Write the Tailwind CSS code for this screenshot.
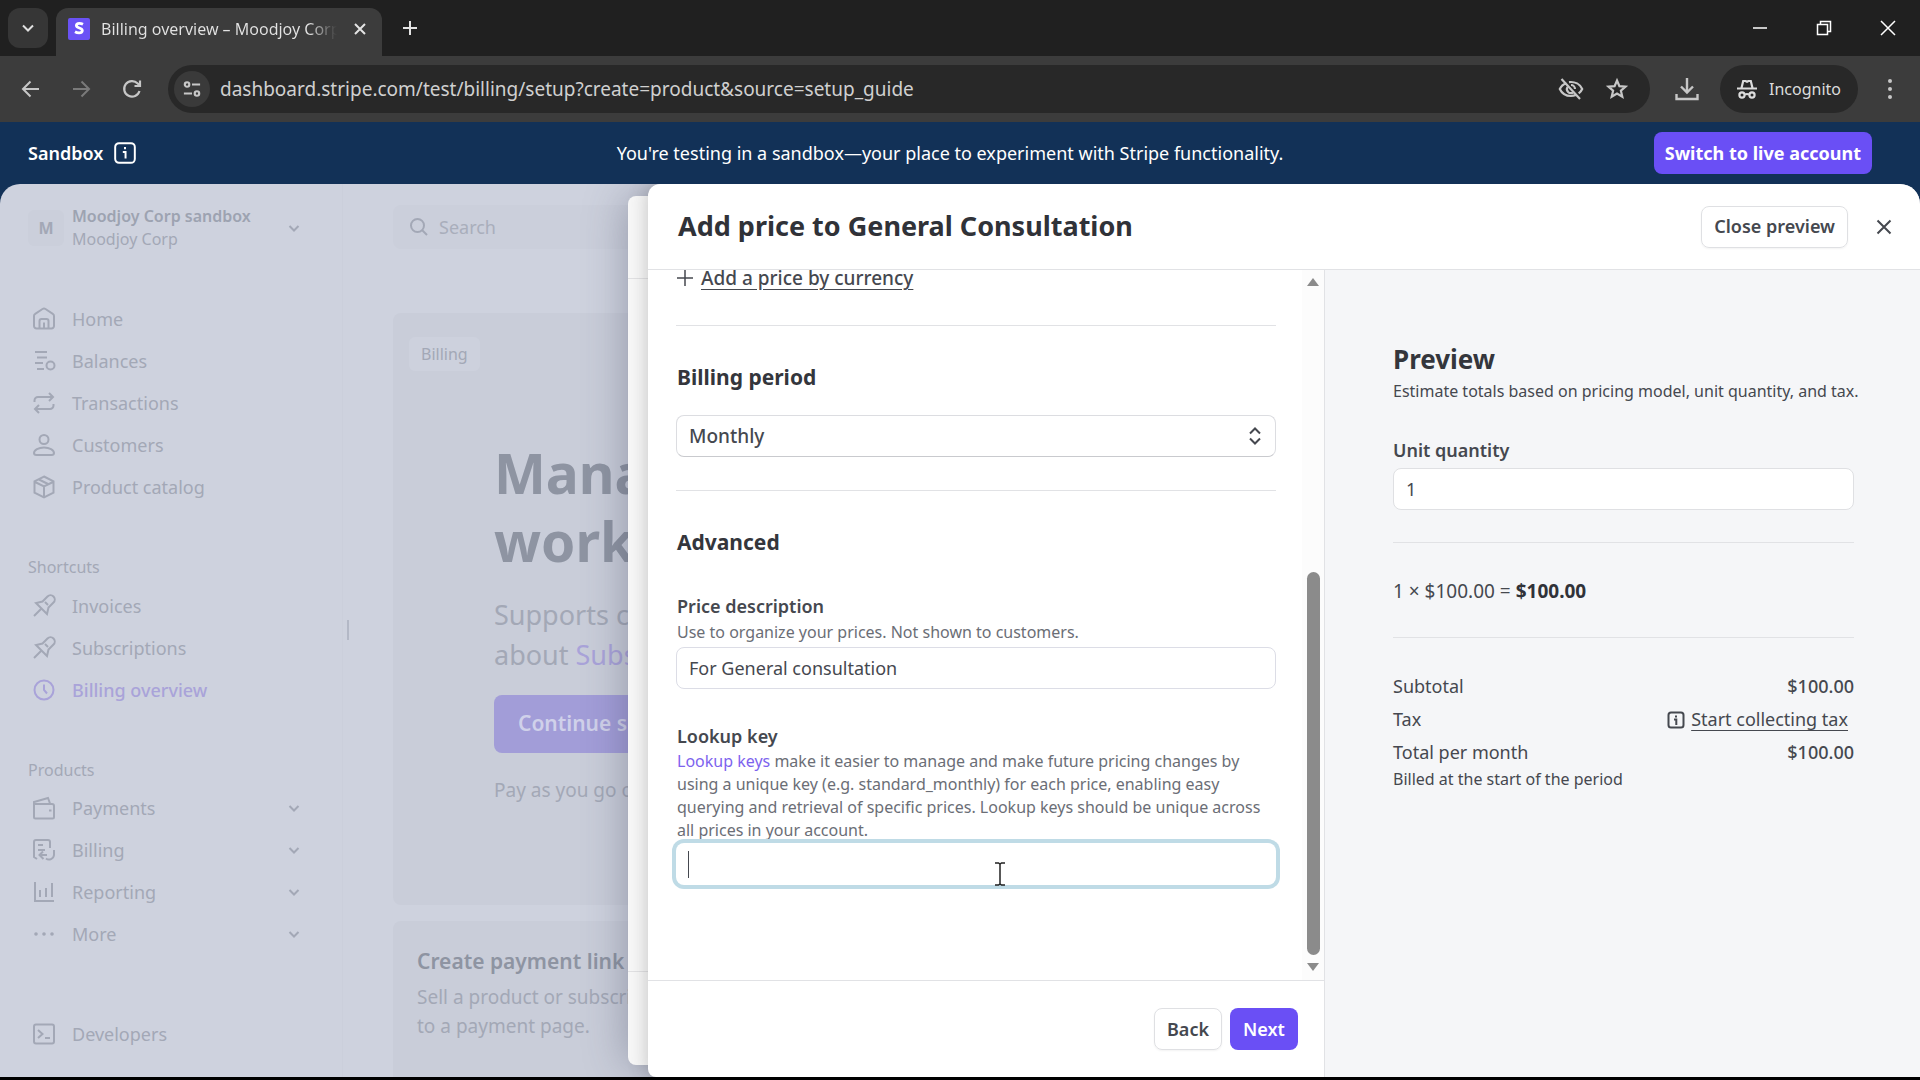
<!DOCTYPE html>
<html lang="en">
<head>
    <meta charset="UTF-8">
    <meta name="viewport" content="width=device-width, initial-scale=1.0">
    <title>Billing overview – Moodjoy Corp</title>
    <script src="https://cdn.jsdelivr.net/npm/@tailwindcss/browser@4"></script>
</head>
<body class="h-screen overflow-hidden bg-black font-['Noto_Sans',sans-serif] text-[18px] text-[#45484f]">
    <div class="flex h-full flex-col pb-[3px]">

        <!-- Browser tabs -->
        <div class="flex h-14 shrink-0 items-end bg-[#202020] pl-2">
            <button aria-label="Search tabs" class="mb-2 flex h-10 w-10 items-center justify-center rounded-xl bg-[#363636] text-[#e0e0e0]">
                <svg class="h-4 w-4" viewBox="0 0 16 16" fill="none" stroke="currentColor" stroke-width="2"><path d="M3 5.500l5 5 5-5"/></svg>
            </button>
            <div class="ml-2 flex h-12 w-[326px] items-center rounded-t-xl bg-[#3c3c3c] pr-[14px] pl-[11px] text-[#e3e3e3]">
                <svg class="mb-[6px] h-6 w-6 shrink-0" viewBox="0 0 24 24"><rect x="1" y="1" width="22" height="22" rx="2" fill="#6a52f5"/><path d="M16 7.300C14.800 6.700 13.500 6.400 12.300 6.400c-1.800 0-2.900.8-2.900 2.100 0 3 5.900 2 5.900 5 0 1.500-1.300 2.300-3.200 2.300-1.400 0-2.900-.4-4.100-1.100" fill="none" stroke="#fff" stroke-width="2.800"/></svg>
                <div class="mb-[6px] ml-[10px] w-[236px] overflow-hidden whitespace-nowrap bg-linear-to-r from-[#e3e3e3] from-88% to-[#3c3c3c] bg-clip-text text-[16px] leading-6 text-transparent">Billing overview – Moodjoy Corp</div>
                <button aria-label="Close tab" class="mb-[6px] ml-auto"><svg class="h-4 w-4" viewBox="0 0 16 16" stroke="currentColor" stroke-width="2"><path d="M3 3l10 10M13 3L3 13"/></svg></button>
            </div>
            <button aria-label="New tab" class="mb-[18px] ml-[18px] text-[#e3e3e3]"><svg class="h-5 w-5" viewBox="0 0 20 20" stroke="currentColor" stroke-width="2"><path d="M10 3v14M3 10h14"/></svg></button>
            <div class="mb-5 ml-auto flex items-center gap-12 pr-6 text-white">
                <button aria-label="Minimize"><svg class="h-4 w-4" viewBox="0 0 16 16" stroke="currentColor" stroke-width="1.500"><path d="M1 8h14"/></svg></button>
                <button aria-label="Restore"><svg class="h-4 w-4" viewBox="0 0 16 16" fill="none" stroke="currentColor" stroke-width="1.500"><path d="M1.500 4.500h10v10h-10zM4.500 4.500v-3h10v10h-3"/></svg></button>
                <button aria-label="Close window"><svg class="h-4 w-4" viewBox="0 0 16 16" stroke="currentColor" stroke-width="1.500"><path d="M1 1l14 14M15 1L1 15"/></svg></button>
            </div>
        </div>

        <!-- Address bar -->
        <div class="flex h-[66px] shrink-0 items-center bg-[#3c3c3c] pr-[18px] pl-5 text-[#c7c7c7]">
            <button aria-label="Back"><svg class="h-[22px] w-[22px]" viewBox="0 0 22 22" fill="none" stroke="currentColor" stroke-width="2"><path d="M19 11H3M10.500 3.500L3 11l7.500 7.500"/></svg></button>
            <button aria-label="Forward" class="ml-7 text-[#7a7a7a]"><svg class="h-[22px] w-[22px]" viewBox="0 0 22 22" fill="none" stroke="currentColor" stroke-width="2"><path d="M3 11h16M11.500 3.500L19 11l-7.500 7.500"/></svg></button>
            <button aria-label="Reload" class="ml-7"><svg class="h-6 w-6" viewBox="0 0 24 24" fill="none" stroke="currentColor" stroke-width="2.200"><path d="M19.500 14a7.800 7.800 0 1 1-1.800-7.500L20 8.800M20 3.500V9h-5.500"/></svg></button>
            <div class="ml-6 flex h-12 flex-1 items-center rounded-full bg-[#282828] pr-5 pl-[6px]">
                <button aria-label="Site information" class="flex h-9 w-9 items-center justify-center rounded-full bg-[#3a3a3a]"><svg class="h-[18px] w-[18px]" viewBox="0 0 20 20" fill="none" stroke="currentColor" stroke-width="2.400"><circle cx="4.500" cy="5" r="2.500"/><path d="M10 5h9M1 15h9"/><circle cx="15.500" cy="15" r="2.500"/></svg></button>
                <input aria-label="Address" type="text" value="dashboard.stripe.com/test/billing/setup?create=product&source=setup_guide" class="ml-[10px] min-w-0 flex-1 bg-transparent text-[19px] text-[#d0d0d0] outline-none">
                <button aria-label="Third-party cookies blocked"><svg class="h-[26px] w-[26px]" viewBox="0 0 26 26" fill="none" stroke="currentColor" stroke-width="2.200"><path d="M3.500 3l18.500 20M8.500 7C5 8.300 2.700 11 1.800 13c2 4.300 6.200 7 11.200 7 1.700 0 3.300-.3 4.700-.9M11 6.200c6-.9 11 2.300 13.200 6.800-.8 1.800-2 3.200-3.500 4.400"/><path d="M9.500 11a4 4 0 0 0 5.500 5.500M13 9a4 4 0 0 1 4 4"/></svg></button>
                <button aria-label="Bookmark" class="ml-5"><svg class="h-[26px] w-[26px]" viewBox="0 0 26 26" fill="none" stroke="currentColor" stroke-width="2.200"><path d="M13 4.500l2.400 5.700 6.100.5-4.600 4 1.400 6-5.300-3.200-5.300 3.200 1.400-6-4.600-4 6.100-.5z"/></svg></button>
            </div>
            <button aria-label="Downloads" class="ml-6"><svg class="h-[26px] w-[26px]" viewBox="0 0 26 26" fill="none" stroke="currentColor" stroke-width="2.400"><path d="M13 2v14M7 10.500l6 6 6-6M2.500 18v5h21v-5"/></svg></button>
            <button class="ml-5 flex h-12 w-[138px] items-center rounded-full bg-[#282828] pl-4 text-[#dcdcdc]">
                <svg class="h-[22px] w-[22px]" viewBox="0 0 22 22" fill="none" stroke="currentColor" stroke-width="2.200"><path d="M1 10.500h20M5.500 10l1.700-7h2.300l1.500.8 1.500-.8h2.300l1.700 7"/><circle cx="6" cy="17" r="2.600"/><circle cx="16" cy="17" r="2.600"/><path d="M9 16.500q2-1 4 0"/></svg>
                <span class="ml-[11px] text-[16px]">Incognito</span>
            </button>
            <button aria-label="Menu" class="ml-5"><svg class="h-6 w-6" viewBox="0 0 24 24" fill="currentColor"><circle cx="12" cy="4" r="2"/><circle cx="12" cy="12" r="2"/><circle cx="12" cy="20" r="2"/></svg></button>
        </div>

        <!-- Sandbox banner -->
        <div class="grid h-[62px] shrink-0 grid-cols-[1fr_auto_1fr] items-center bg-[#123157] pr-12 pl-7 text-white">
            <div class="flex items-center gap-[10px] font-semibold">Sandbox
                <svg class="h-6 w-6" viewBox="0 0 22 22" fill="none" stroke="currentColor" stroke-width="1.800"><rect x="2" y="2" width="18" height="18" rx="3.500"/><path d="M9 10h2.500v6M11 5.500v2"/></svg>
            </div>
            <div>You're testing in a sandbox—your place to experiment with Stripe functionality.</div>
            <button class="h-[42px] justify-self-end rounded-lg bg-[#6a4ff5] px-[11px] font-bold">Switch to live account</button>
        </div>

        <div class="min-h-0 flex-1 bg-[#123157]">
            <div class="relative flex h-full overflow-hidden rounded-t-[20px] bg-[#ced2de] text-[#a3a8b6]">

                <!-- Sidebar -->
                <nav class="flex w-[343px] shrink-0 flex-col border-r border-[#cbcfdb] pr-10 pl-7">
                    <button class="mt-[21px] flex items-center text-left">
                        <span class="flex h-9 w-9 items-center justify-center rounded-md bg-[#cbcfdb] text-[16px] font-bold">M</span>
                        <span class="ml-2 text-[16px] leading-[23px]"><span class="block font-semibold text-[#9da3b1]">Moodjoy Corp sandbox</span><span class="block">Moodjoy Corp</span></span>
                        <svg class="ml-auto h-4 w-4" viewBox="0 0 16 16" fill="none" stroke="currentColor" stroke-width="2"><path d="M3.500 6L8 10.500 12.500 6"/></svg>
                    </button>
                    <div class="mt-[47px] flex flex-col">
                        <a href="#" class="flex h-[42px] items-center gap-4 pl-1"><svg class="h-6 w-6" viewBox="0 0 24 24" fill="none" stroke="currentColor" stroke-width="2"><path d="M2 9a2.500 2.500 0 0 1 1.200-2.200L10.500 2a3 3 0 0 1 3 0l7.300 4.800A2.500 2.500 0 0 1 22 9v10a2.500 2.500 0 0 1-2.500 2.500H16.500V14a2 2 0 0 0-2-2h-5a2 2 0 0 0-2 2v7.500h-3A2.500 2.500 0 0 1 2 19zM12 15.500V22M7.500 21.500h9"/></svg>Home</a>
                        <a href="#" class="flex h-[42px] items-center gap-4 pl-1"><svg class="h-6 w-6" viewBox="0 0 24 24" fill="none" stroke="currentColor" stroke-width="2"><path d="M3 3h12M5 8.500h10M3 14h8M5 20h7"/><circle cx="18.500" cy="16.500" r="4"/></svg>Balances</a>
                        <a href="#" class="flex h-[42px] items-center gap-4 pl-1"><svg class="h-6 w-6" viewBox="0 0 24 24" fill="none" stroke="currentColor" stroke-width="2"><path d="M2.500 11V9.500A3.500 3.500 0 0 1 6 6h15M17 2l4 4-4 4M21.500 13v1.500A3.500 3.500 0 0 1 18 18H3M7 14l-4 4 4 4"/></svg>Transactions</a>
                        <a href="#" class="flex h-[42px] items-center gap-4 pl-1"><svg class="h-6 w-6" viewBox="0 0 24 24" fill="none" stroke="currentColor" stroke-width="2"><circle cx="12" cy="6.500" r="4.500"/><path d="M12 14.500c5.500 0 10 2.500 10 5.500 0 1.300-1 2-2.500 2h-15C3 22 2 21.300 2 20c0-3 4.500-5.500 10-5.500z"/></svg>Customers</a>
                        <a href="#" class="flex h-[42px] items-center gap-4 pl-1"><svg class="h-6 w-6" viewBox="0 0 24 24" fill="none" stroke="currentColor" stroke-width="2"><path d="M12 1.500l9.500 4.800v11.400L12 22.500l-9.500-4.800V6.300zM3 7l9 4.500L21 7M12 11.500v11M7 4.500l9 4.500"/></svg>Product catalog</a>
                    </div>
                    <h2 class="mt-12 text-[16px] leading-[22px]">Shortcuts</h2>
                    <div class="mt-[7px] flex flex-col">
                        <a href="#" class="flex h-[42px] items-center gap-4 pl-1"><svg class="h-6 w-6" viewBox="0 0 24 24" fill="none" stroke="currentColor" stroke-width="2"><path d="M2 22l7-7M4 9l11 11 1.500-6.500 5-5a4 4 0 0 0-6-6l-5 5zM13 8l3 3"/></svg>Invoices</a>
                        <a href="#" class="flex h-[42px] items-center gap-4 pl-1"><svg class="h-6 w-6" viewBox="0 0 24 24" fill="none" stroke="currentColor" stroke-width="2"><path d="M2 22l7-7M4 9l11 11 1.500-6.500 5-5a4 4 0 0 0-6-6l-5 5zM13 8l3 3"/></svg>Subscriptions</a>
                        <a href="#" class="flex h-[42px] items-center gap-4 pl-1 font-medium text-[#a9a3d9]"><svg class="h-6 w-6" viewBox="0 0 24 24" fill="none" stroke="currentColor" stroke-width="2"><circle cx="12" cy="12" r="9.500"/><path d="M12 6.500V12l3 3.500"/></svg>Billing overview</a>
                    </div>
                    <h2 class="mt-12 text-[16px] leading-[22px]">Products</h2>
                    <div class="mt-[6px] flex flex-col">
                        <button class="flex h-[42px] items-center gap-4 pl-1"><svg class="h-6 w-6" viewBox="0 0 24 24" fill="none" stroke="currentColor" stroke-width="2"><path d="M2 8h18a2 2 0 0 1 2 2v11a1.500 1.500 0 0 1-1.500 1.500h-17A1.500 1.500 0 0 1 2 21V6L16 2l2 5.500M17 14.500h2.500"/></svg>Payments<svg class="ml-auto h-4 w-4" viewBox="0 0 16 16" fill="none" stroke="currentColor" stroke-width="2"><path d="M3.500 6L8 10.500 12.500 6"/></svg></button>
                        <button class="flex h-[42px] items-center gap-4 pl-1"><svg class="h-6 w-6" viewBox="0 0 24 24" fill="none" stroke="currentColor" stroke-width="2"><path d="M18 10V4a2 2 0 0 0-2-2H4a2 2 0 0 0-2 2v15l3 2M6 7h5M6 12h7M8 17h7M11 13.500L7.500 17l4 4M22 12v5a5 5 0 0 1-8 3.500"/></svg>Billing<svg class="ml-auto h-4 w-4" viewBox="0 0 16 16" fill="none" stroke="currentColor" stroke-width="2"><path d="M3.500 6L8 10.500 12.500 6"/></svg></button>
                        <button class="flex h-[42px] items-center gap-4 pl-1"><svg class="h-6 w-6" viewBox="0 0 24 24" fill="none" stroke="currentColor" stroke-width="2"><path d="M3 2v19h19M8 10v7M14 8v9M20 3v14"/></svg>Reporting<svg class="ml-auto h-4 w-4" viewBox="0 0 16 16" fill="none" stroke="currentColor" stroke-width="2"><path d="M3.500 6L8 10.500 12.500 6"/></svg></button>
                        <button class="flex h-[42px] items-center gap-4 pl-1"><svg class="h-6 w-6" viewBox="0 0 24 24" fill="currentColor"><circle cx="4" cy="12" r="1.800"/><circle cx="12" cy="12" r="1.800"/><circle cx="20" cy="12" r="1.800"/></svg>More<svg class="ml-auto h-4 w-4" viewBox="0 0 16 16" fill="none" stroke="currentColor" stroke-width="2"><path d="M3.500 6L8 10.500 12.500 6"/></svg></button>
                    </div>
                    <a href="#" class="mt-auto mb-[22px] flex h-[42px] items-center gap-4 pl-1"><svg class="h-6 w-6" viewBox="0 0 24 24" fill="none" stroke="currentColor" stroke-width="2"><rect x="2" y="2.500" width="20" height="19" rx="2"/><path d="M6 8l4.500 4L6 16M13 16h5"/></svg>Developers</a>
                </nav>
                <div class="absolute top-[436px] left-[347px] h-5 w-[2px] bg-[#b3b8c6]"></div>

                <!-- Dashboard page -->
                <main class="min-w-0 flex-1 pt-[21px] pl-[50px]">
                    <div class="flex h-11 items-center rounded-lg bg-[#cbcfdb] pl-4">
                        <svg class="h-5 w-5" viewBox="0 0 20 20" fill="none" stroke="currentColor" stroke-width="2"><circle cx="8.500" cy="8.500" r="6.500"/><path d="M13 13l5 5"/></svg>
                        <input aria-label="Search" type="text" placeholder="Search" class="ml-[10px] w-48 bg-transparent outline-none placeholder:text-[#a9aebb]">
                    </div>
                    <section class="mt-16 h-[592px] rounded-lg bg-[#c9cdd9] pt-6 pl-4">
                        <span class="inline-block rounded-md bg-[#cdd1dd] px-3 text-[16px] leading-[34px]">Billing</span>
                        <div class="mt-[68px] pl-[85px] whitespace-nowrap">
                            <h1 class="text-[55px] leading-[68px] font-bold text-[#8e94a2]">Manag<br>work</h1>
                            <p class="mt-5 text-[27px] leading-10">Supports c<br>about <a href="#" class="text-[#a9a3d9]">Subs</a></p>
                            <button class="mt-5 h-[58px] w-48 overflow-hidden rounded-lg bg-[#a29dd8] pl-6 text-left text-[21px] font-semibold text-[#d0d1ea]">Continue s</button>
                            <p class="mt-6 text-[19px] leading-[26px]">Pay as you go o</p>
                        </div>
                    </section>
                    <section class="mt-4 h-60 rounded-lg bg-[#c9cdd9] pt-6 pl-6 whitespace-nowrap">
                        <h2 class="text-[21px] leading-8 font-semibold text-[#8e94a2]">Create payment link</h2>
                        <p class="mt-[6px] text-[19px] leading-[29px]">Sell a product or subscri<br>to a payment page.</p>
                    </section>
                </main>

                <!-- Drawer underneath -->
                <div class="absolute top-3 right-8 bottom-3 left-[628px] flex flex-col overflow-hidden rounded-lg bg-[#f8f8f8] shadow-[0_0_44px_rgba(60,66,90,0.4)]">
                    <div class="h-[83px] border-b border-[#e2e2e4]"></div>
                    <div class="mt-auto h-[94px] border-t border-[#e2e2e4]"></div>
                </div>

                <!-- Add price drawer -->
                <div class="absolute top-0 right-0 bottom-0 left-[648px] flex flex-col rounded-t-xl rounded-bl-lg bg-white text-[#45484f] shadow-[0_0_20px_rgba(60,60,60,0.3)]">
                    <header class="flex h-[86px] shrink-0 items-center border-b border-[#e1e2e5] pr-7 pl-[30px]">
                        <h1 class="text-[27px] font-bold text-[#303238]">Add price to General Consultation</h1>
                        <button class="ml-auto h-[42px] rounded-lg border border-[#dfe0e3] px-3 font-semibold shadow-xs">Close preview</button>
                        <button aria-label="Close" class="ml-7"><svg class="h-4 w-4" viewBox="0 0 16 16" stroke="currentColor" stroke-width="2"><path d="M1.500 1.500l13 13M14.500 1.500l-13 13"/></svg></button>
                    </header>
                    <div class="flex min-h-0 flex-1">
                        <div class="flex min-w-0 flex-1 flex-col border-r border-[#e1e2e5]">
                            <div class="flex min-h-0 flex-1">
                                <form class="min-w-0 flex-1 pl-7">
                                    <div class="flex h-4 items-center gap-2 pl-[1px] font-medium">
                                        <svg class="h-4 w-4" viewBox="0 0 16 16" stroke="currentColor" stroke-width="1.500"><path d="M8 0v16M0 8h16"/></svg>
                                        <a href="#" class="text-[19px] leading-4 underline underline-offset-4">Add a price by currency</a>
                                    </div>
                                    <hr class="mt-[39px] border-[#e1e2e5]">
                                    <h2 class="mt-[37px] pl-[1px] text-[21px] leading-7 font-bold text-[#34363c]"><label for="period">Billing period</label></h2>
                                    <div class="relative mt-6">
                                        <select id="period" class="h-[42px] w-full appearance-none rounded-lg border border-[#dcdde1] border-b-[#c9cace] bg-white px-3 text-[19px] font-medium"><option>Monthly</option></select>
                                        <svg class="pointer-events-none absolute top-3 right-3 h-[18px] w-[18px]" viewBox="0 0 18 18" fill="none" stroke="currentColor" stroke-width="2"><path d="M4 6.500l5-5 5 5M4 11.500l5 5 5-5"/></svg>
                                    </div>
                                    <hr class="mt-[33px] border-[#e1e2e5]">
                                    <h2 class="mt-[37px] pl-[1px] text-[21px] leading-7 font-bold text-[#34363c]">Advanced</h2>
                                    <label for="description" class="mt-[38px] block pl-[1px] leading-6 font-semibold">Price description</label>
                                    <p class="mt-[3px] pl-[1px] text-[16px] leading-[23px] text-[#6b6e76]">Use to organize your prices. Not shown to customers.</p>
                                    <input id="description" type="text" value="For General consultation" class="mt-[3px] block h-[42px] w-full rounded-lg border border-[#dcdde6] px-3">
                                    <label for="lookup" class="mt-[35px] block pl-[1px] leading-6 font-semibold">Lookup key</label>
                                    <p class="mt-[2px] pl-[1px] text-[16px] leading-[23px] whitespace-nowrap text-[#6b6e76]"><a href="#" class="text-[#7d63ee]">Lookup keys</a> make it easier to manage and make future pricing changes by<br>using a unique key (e.g. standard_monthly) for each price, enabling easy<br>querying and retrieval of specific prices. Lookup keys should be unique across<br>all prices in your account.</p>
                                    <div class="relative mt-[1px]">
                                        <input id="lookup" type="text" class="block h-[42px] w-full rounded-lg px-3 ring-4 ring-[#bfdbe6] outline-none">
                                        <span class="absolute top-2 left-3 h-[27px] w-[1px] bg-[#45484f]"></span>
                                        <svg class="absolute top-[19px] left-[53%] h-6 w-3" viewBox="0 0 12 24" fill="none" stroke="#222" stroke-width="1.500"><path d="M1 1h3.500L6 2l1.500-1H11M6 2v20M1 23h3.500L6 22l1.500 1H11"/></svg>
                                    </div>
                                </form>
                                <!-- Scrollbar -->
                                <div class="ml-[26px] flex w-[22px] flex-col items-center bg-[#fcfcfc] pt-2 pb-[9px] text-[#8b8b8b]">
                                    <svg class="h-2 w-3" viewBox="0 0 12 8" fill="currentColor"><path d="M6 0l6 8H0z"/></svg>
                                    <div class="mt-auto h-[383px] w-[13px] rounded-full bg-[#8b8b8b]"></div>
                                    <svg class="mt-2 h-2 w-3" viewBox="0 0 12 8" fill="currentColor"><path d="M6 8L0 0h12z"/></svg>
                                </div>
                            </div>
                            <footer class="flex h-[97px] shrink-0 items-center justify-end gap-2 border-t border-[#e1e2e5] pr-[26px]">
                                <button class="h-[42px] w-[68px] rounded-lg border border-[#dfe0e3] font-semibold shadow-xs">Back</button>
                                <button class="h-[42px] w-[68px] rounded-lg bg-[#6a4ff5] font-semibold text-white">Next</button>
                            </footer>
                        </div>

                        <!-- Preview -->
                        <aside class="w-[595px] shrink-0 bg-[#f5f6f8] pt-[71px] pr-[66px] pl-[68px]">
                            <h2 class="text-[26px] leading-9 font-bold text-[#34363c]">Preview</h2>
                            <p class="mt-[3px] text-[16px] leading-[23px] whitespace-nowrap">Estimate totals based on pricing model, unit quantity, and tax.</p>
                            <label for="quantity" class="mt-[35px] block leading-6 font-semibold">Unit quantity</label>
                            <input id="quantity" type="text" value="1" class="mt-[6px] block h-[42px] w-full rounded-lg border border-[#dfe0e3] bg-white px-3">
                            <hr class="mt-8 border-[#e1e2e5]">
                            <p class="mt-9 text-[19px] leading-6">1 × $100.00 = <b class="text-[#303238]">$100.00</b></p>
                            <hr class="mt-[34px] border-[#e1e2e5]">
                            <dl class="mt-8">
                                <div class="flex h-[33px] items-center justify-between"><dt>Subtotal</dt><dd class="font-medium">$100.00</dd></div>
                                <div class="flex h-[33px] items-center justify-between"><dt>Tax</dt><dd class="flex items-center gap-[6px] pr-[6px]"><svg class="h-[18px] w-[18px]" viewBox="0 0 18 18" fill="none" stroke="currentColor" stroke-width="2"><rect x="1.500" y="1.500" width="15" height="15" rx="2.500"/><path d="M7 8.500h2.300V14M9 4.500v2"/></svg><a href="#" class="underline underline-offset-4">Start collecting tax</a></dd></div>
                                <div class="flex h-[33px] items-center justify-between"><dt>Total per month</dt><dd class="font-medium">$100.00</dd></div>
                            </dl>
                            <p class="text-[16px] leading-5">Billed at the start of the period</p>
                        </aside>
                    </div>
                </div>
            </div>
        </div>
    </div>
</body>
</html>
